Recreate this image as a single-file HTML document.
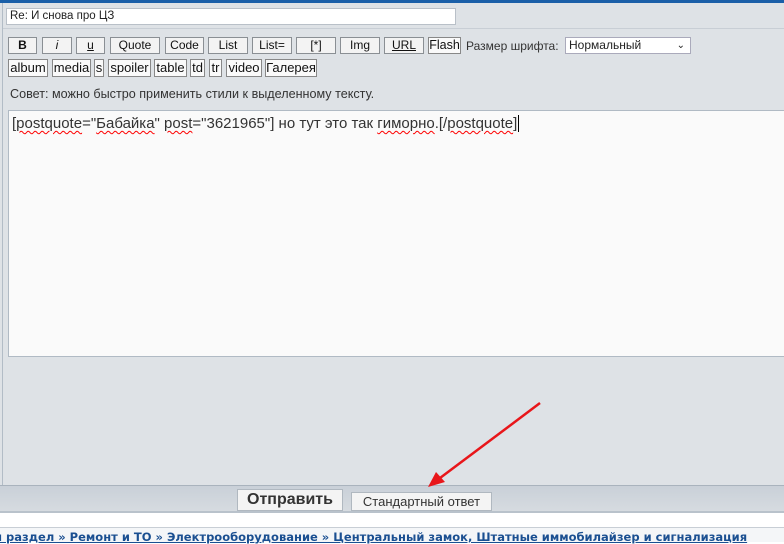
<!DOCTYPE html>
<html><head><meta charset="utf-8"><style>
*{box-sizing:border-box;margin:0;padding:0}
body{width:784px;height:542px;overflow:hidden;background:#fff;font-family:"Liberation Sans",sans-serif;position:relative}
.main{position:absolute;left:0;top:0;width:784px;height:485px;background:#dee2e6}
.topbar{position:absolute;left:0;top:0;width:784px;height:3px;background:#1a5fa8}
.vl{position:absolute;left:2px;top:3px;width:1px;height:482px;background:#b2bcc6}
.hl{position:absolute;left:3px;top:28px;width:781px;height:1px;background:#c8ced5}
.title{position:absolute;left:6px;top:8px;width:450px;height:17px;background:#fff;border:1px solid #b9c0c8;font-size:11.5px;padding:1px 3px;color:#222}
.btn{position:absolute;height:17px;border:1px solid #8a8f94;background:#f3f3f3;font-size:12px;text-align:center;line-height:15px;color:#111}
.b2{position:absolute;height:18px;border:1px solid #888;background:#fafafa;font-size:13px;line-height:16px;text-align:center;color:#111}
.lbl{position:absolute;font-size:12.6px;color:#333}
.sel{position:absolute;left:565px;top:37px;width:126px;height:17px;background:#fff;border:1px solid #aab;font-size:12px;padding:0 3px;line-height:15px;color:#222}
.ta{position:absolute;left:8px;top:110px;width:790px;height:247px;background:#fafafa;border:1px solid #b0bac4;font-size:15px;padding:4px 3px;color:#333}
.sq{text-decoration:underline wavy red;text-decoration-thickness:1px;text-underline-offset:2px}
.strip{position:absolute;left:0;top:485px;width:784px;height:28px;background:linear-gradient(#c9d0d8,#d6dbe0);border-top:1px solid #a9b3bd;border-bottom:2px solid #b9c2cb}
.send{position:absolute;left:237px;top:489px;width:106px;height:22px;border:1px solid #b0b8c0;background:#f4f4f4;font-weight:bold;font-size:16px;text-align:center;line-height:20px;color:#333}
.std{position:absolute;left:351px;top:492px;width:141px;height:19px;border:1px solid #b0b8c0;background:#f4f4f4;font-size:13px;text-align:center;line-height:17px;color:#333}
.crumb{position:absolute;left:-6px;top:527px;width:800px;height:15px;border-top:1px solid #c8ced5;background:#f4f6f8;font-family:"DejaVu Sans",sans-serif;font-size:11.5px;font-weight:bold;color:#1a4f91;white-space:nowrap;padding-top:2px;text-decoration:underline}
</style></head><body>
<div class="main"></div>
<div class="topbar"></div><div class="vl"></div><div class="hl"></div>
<div class="title">Re: И снова про ЦЗ</div>
<div class="btn" style="left:8px;top:37px;width:29px;font-weight:bold">B</div>
<div class="btn" style="left:42px;top:37px;width:30px;font-style:italic">i</div>
<div class="btn" style="left:76px;top:37px;width:29px;text-decoration:underline">u</div>
<div class="btn" style="left:110px;top:37px;width:50px">Quote</div>
<div class="btn" style="left:165px;top:37px;width:39px">Code</div>
<div class="btn" style="left:208px;top:37px;width:40px">List</div>
<div class="btn" style="left:252px;top:37px;width:40px">List=</div>
<div class="btn" style="left:296px;top:37px;width:40px">[*]</div>
<div class="btn" style="left:340px;top:37px;width:40px">Img</div>
<div class="btn" style="left:384px;top:37px;width:40px;text-decoration:underline">URL</div>
<div class="b2" style="left:428px;top:37px;width:33px;height:17px;line-height:15px;font-size:12.5px">Flash</div>
<div class="lbl" style="left:466px;top:39px;font-size:12px">Размер шрифта:</div>
<div class="sel">Нормальный<span style="position:absolute;right:5px;top:0;font-size:10px">&#8964;</span></div>
<div class="b2" style="left:8px;top:59px;width:40px">album</div>
<div class="b2" style="left:52px;top:59px;width:39px">media</div>
<div class="b2" style="left:94px;top:59px;width:10px">s</div>
<div class="b2" style="left:108px;top:59px;width:43px">spoiler</div>
<div class="b2" style="left:154px;top:59px;width:33px">table</div>
<div class="b2" style="left:190px;top:59px;width:15px">td</div>
<div class="b2" style="left:209px;top:59px;width:13px">tr</div>
<div class="b2" style="left:226px;top:59px;width:36px">video</div>
<div class="b2" style="left:265px;top:59px;width:52px">Галерея</div>
<div class="lbl" style="left:10px;top:87px">Совет: можно быстро применить стили к выделенному тексту.</div>
<div class="ta">[<span class="sq">postquote</span>="<span class="sq">Бабайка</span>" <span class="sq">post</span>="3621965"] но тут это так <span class="sq">гиморно</span>.[/<span class="sq">postquote</span>]<span style="border-left:1px solid #000;margin-left:1px"></span></div>
<div class="strip"></div>
<div class="send">Отправить</div>
<div class="std">Стандартный ответ</div>
<div class="crumb">й раздел » Ремонт и ТО » Электрооборудование » Центральный замок, Штатные иммобилайзер и сигнализация</div>
<svg style="position:absolute;left:0;top:0" width="784" height="542">
<line x1="540" y1="403" x2="440" y2="478" stroke="#e8161a" stroke-width="2.5"/>
<polygon points="428,487 436,472 445,482" fill="#e8161a"/>
</svg>
</body></html>
